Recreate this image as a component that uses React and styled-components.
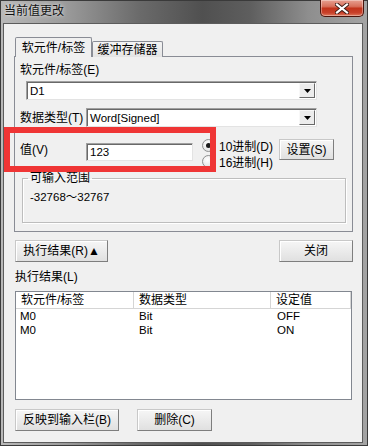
import React from 'react'
import styled, { createGlobalStyle } from 'styled-components'

const GlobalStyle = createGlobalStyle`
  html, body { margin: 0; padding: 0; background: #fff; }
  body {
    font-family: "Liberation Sans", "Noto Sans CJK SC", sans-serif;
    font-size: 12px;
    color: #000;
  }
  * { box-sizing: border-box; }
`

const Window = styled.div`
  position: relative;
  width: 368px;
  height: 446px;
  border: 1px solid #3a3a3a;
  padding: 0 4px 2px 2px;
  display: flex;
  flex-direction: column;
  background: linear-gradient(90deg, #b8b8b8 0%, #9a9a9a 18%, #6a6a6a 38%, #505050 55%, #5e5e5e 68%, #8e8e8e 84%, #a4a4a4 100%);
`

const TitleBar = styled.div`
  height: 22px;
  flex: none;
  display: flex;
  justify-content: space-between;
  align-items: flex-start;
`

const TitleText = styled.div`
  padding: 3px 0 0 1px;
  line-height: 14px;
  color: #111;
  text-shadow: 0 0 5px rgba(255, 255, 255, 0.7), 0 0 2px rgba(255, 255, 255, 0.5);
`

const CloseButton = styled.div`
  width: 44px;
  height: 17px;
  margin: -1px -1px 0 0;
  border: 1px solid #4a140c;
  border-top: none;
  border-radius: 0 0 5px 5px;
  background: linear-gradient(180deg, #e7a091 0%, #d8705c 40%, #c2341c 52%, #c8402a 80%, #de7a5e 100%);
  box-shadow: inset 0 0 0 1px rgba(255, 255, 255, 0.35);
  display: flex;
  align-items: center;
  justify-content: center;
`

const Client = styled.div`
  flex: 1;
  border: 1px solid #5c5c5c;
  background: #f0f0f0;
  padding: 13px 9px 0 10px;
  display: flex;
  flex-direction: column;
`

const TabStrip = styled.div`
  height: 20px;
  display: flex;
  align-items: flex-end;
  padding-left: 1px;
  position: relative;
  z-index: 1;
`

const Tab = styled.div`
  width: ${p => p.w}px;
  height: ${p => (p.active ? 20 : 16)}px;
  border: 1px solid #898c95;
  border-bottom: none;
  border-radius: 2px 2px 0 0;
  background: ${p => (p.active ? '#f0f0f0' : 'linear-gradient(180deg, #f4f4f4, #e4e4e4)')};
  display: flex;
  align-items: center;
  justify-content: center;
  line-height: 14px;
  margin-left: ${p => (p.active ? 0 : 0)}px;
`

const Panel = styled.div`
  width: 339px;
  margin-top: -1px;
  border: 1px solid #898c95;
  background: #f0f0f0;
  padding-bottom: 8px;
  display: flex;
  flex-direction: column;
`

const Label = styled.div`
  line-height: 14px;
  margin: ${p => p.m || '0'};
  width: ${p => (p.w ? `${p.w}px` : 'auto')};
  flex: none;
`

const Combo = styled.div`
  width: ${p => p.w}px;
  height: 19px;
  margin: ${p => p.m || '0'};
  background: #fff;
  border: 1px solid;
  border-color: #a0a0a0 #e3e3e3 #e3e3e3 #a0a0a0;
  box-shadow: inset 1px 1px 0 #696969;
  display: flex;
  align-items: center;
  justify-content: space-between;
  padding: 1px 1px 1px 3px;
  font-size: 11.5px;
`

const DropButton = styled.div`
  width: 16px;
  height: 15px;
  background: #ececec;
  border: 1px solid;
  border-color: #f8f8f8 #696969 #696969 #f8f8f8;
  display: flex;
  align-items: center;
  justify-content: center;
`

const Row = styled.div`
  display: flex;
  align-items: ${p => p.align || 'center'};
  padding-left: 5px;
  margin-top: ${p => p.mt || 0}px;
`

const TextInput = styled.div`
  width: ${p => p.w}px;
  height: 18px;
  margin-top: 6px;
  background: #fff;
  border: 1px solid;
  border-color: #a0a0a0 #e3e3e3 #e3e3e3 #a0a0a0;
  box-shadow: inset 1px 1px 0 #696969;
  padding: 0 3px;
  line-height: 16px;
  font-size: 11.5px;
`

const RadioGroup = styled.div`
  width: 77px;
  margin-left: 9px;
  display: flex;
  flex-direction: column;
`

const RadioItem = styled.div`
  height: 16px;
  display: flex;
  align-items: center;
  gap: 4px;
`

const RadioCircle = styled.span`
  width: 13px;
  height: 13px;
  border-radius: 50%;
  border: 1px solid #8e8f8f;
  background: radial-gradient(circle at 40% 35%, #ffffff 0%, #e4e4e4 70%, #cfcfcf 100%);
  display: flex;
  align-items: center;
  justify-content: center;
  flex: none;
  &::after {
    content: '';
    width: 5px;
    height: 5px;
    border-radius: 50%;
    background: ${p => (p.checked ? '#1c1c1c' : 'transparent')};
  }
`

const Button = styled.div`
  width: ${p => p.w}px;
  height: ${p => p.h || 22}px;
  margin-top: ${p => p.mt || 0}px;
  border: 1px solid;
  border-color: #c8c8c8 #7e7e7e #7e7e7e #c8c8c8;
  background: linear-gradient(180deg, #f6f6f6 0%, #ebebeb 50%, #e0e0e0 100%);
  box-shadow: inset 1px 1px 0 #ffffff;
  display: flex;
  align-items: center;
  justify-content: center;
  line-height: 14px;
  flex: none;
`

const Group = styled.fieldset`
  width: 324px;
  margin: 2px 0 0 7px;
  padding: 0 5px 18px;
  border: 1px solid #bdbdbd;
  box-shadow: 1px 1px 0 #ffffff, inset 1px 1px 0 #ffffff;
  min-width: 0;
`

const Legend = styled.legend`
  padding: 0 2px;
  line-height: 14px;
`

const RangeText = styled.div`
  margin-top: 5px;
  line-height: 14px;
  padding-left: 2px;
  font-size: 11.5px;
`

const ButtonRow = styled.div`
  display: flex;
  justify-content: ${p => p.justify || 'flex-start'};
  gap: ${p => p.gap || 0}px;
  margin-top: ${p => p.mt}px;
  padding-left: 1px;
`

const ListView = styled.div`
  width: 337px;
  height: 109px;
  margin: 7px 0 0 1px;
  border: 1px solid #828790;
  background: #fff;
  display: flex;
  flex-direction: column;
`

const HeaderRow = styled.div`
  display: flex;
  height: 17px;
  border-bottom: 1px solid #d5d5d5;
`

const HeaderCell = styled.div`
  width: ${p => (p.w ? `${p.w}px` : 'auto')};
  flex: ${p => (p.w ? 'none' : '1')};
  border-right: ${p => (p.w ? '1px solid #d5d5d5' : 'none')};
  padding-left: 5px;
  line-height: 16px;
`

const DataRow = styled.div`
  display: flex;
  height: 14px;
  line-height: 14px;
  font-size: 11.5px;
  &:first-of-type { margin-top: 2px; }
`

const DataCell = styled.div`
  width: ${p => p.w}px;
  flex: none;
  padding-left: ${p => p.pl}px;
`

const RedFrame = styled.div`
  position: absolute;
  left: 3px;
  top: 126px;
  width: 212px;
  height: 45px;
  border: 6px solid #ef3535;
  pointer-events: none;
`

const ArrowDown = () => (
  <svg width="7" height="4" viewBox="0 0 7 4">
    <path d="M0 0h7L3.5 4z" fill="#000" />
  </svg>
)

const CloseGlyph = () => (
  <svg width="14" height="11" viewBox="0 0 14 11">
    <path d="M2 1.5l10 8M12 1.5l-10 8" stroke="#3a1a14" strokeWidth="4" strokeLinecap="square" />
    <path d="M2 1.5l10 8M12 1.5l-10 8" stroke="#ffffff" strokeWidth="2.2" strokeLinecap="square" />
  </svg>
)

const columns = [
  { w: 118, pl: 4 },
  { w: 137, pl: 5 },
  { w: 80, pl: 6 },
]

const results = [
  ['M0', 'Bit', 'OFF'],
  ['M0', 'Bit', 'ON'],
]

export default function App() {
  return (
    <>
      <GlobalStyle />
      <Window>
        <TitleBar>
          <TitleText>当前值更改</TitleText>
          <CloseButton><CloseGlyph /></CloseButton>
        </TitleBar>
        <Client>
          <TabStrip>
            <Tab active w={77}>软元件/标签</Tab>
            <Tab w={71}>缓冲存储器</Tab>
          </TabStrip>
          <Panel>
            <Label m="6px 0 0 5px">软元件/标签(E)</Label>
            <Combo w={291} m="4px 0 0 11px">
              <span>D1</span>
              <DropButton><ArrowDown /></DropButton>
            </Combo>
            <Row mt={8}>
              <Label w={66}>数据类型(T)</Label>
              <Combo w={231}>
                <span>Word[Signed]</span>
                <DropButton><ArrowDown /></DropButton>
              </Combo>
            </Row>
            <Row mt={10} align="flex-start">
              <Label w={66} m="6px 0 0 0">值(V)</Label>
              <TextInput w={107}>123</TextInput>
              <RadioGroup>
                <RadioItem><RadioCircle checked />10进制(D)</RadioItem>
                <RadioItem><RadioCircle />16进制(H)</RadioItem>
              </RadioGroup>
              <Button w={55} h={21} mt={2}>设置(S)</Button>
            </Row>
            <Group>
              <Legend>可输入范围</Legend>
              <RangeText>-32768～32767</RangeText>
            </Group>
          </Panel>
          <ButtonRow mt={8} justify="space-between">
            <Button w={93}>执行结果(R)▲</Button>
            <Button w={74}>关闭</Button>
          </ButtonRow>
          <Label m="8px 0 0 1px">执行结果(L)</Label>
          <ListView>
            <HeaderRow>
              <HeaderCell w={118}>软元件/标签</HeaderCell>
              <HeaderCell w={137}>数据类型</HeaderCell>
              <HeaderCell w={80}>设定值</HeaderCell>
              <HeaderCell />
            </HeaderRow>
            {results.map((r, i) => (
              <DataRow key={i}>
                {r.map((c, j) => (
                  <DataCell key={j} w={columns[j].w} pl={columns[j].pl}>{c}</DataCell>
                ))}
              </DataRow>
            ))}
          </ListView>
          <ButtonRow mt={9} gap={18}>
            <Button w={104}>反映到输入栏(B)</Button>
            <Button w={75}>删除(C)</Button>
          </ButtonRow>
        </Client>
        <RedFrame />
      </Window>
    </>
  )
}
